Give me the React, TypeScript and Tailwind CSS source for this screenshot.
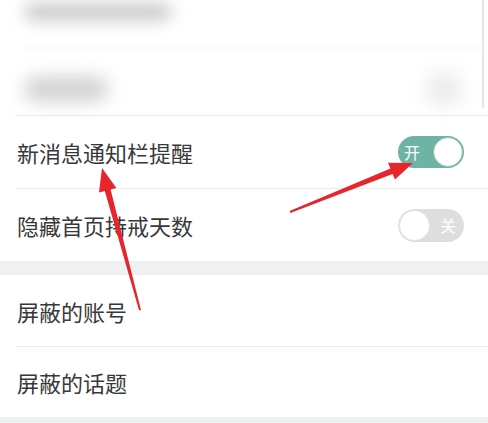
import React from "react";

const font = { fontFamily: '"Noto Sans CJK SC", "Noto Sans", sans-serif' };

function ToggleOn() {
  return (
    <div className="flex h-[32px] w-[66px] items-center justify-between rounded-full bg-[#6db4a4] pl-[6px] pr-[1px]">
      <span className="text-[16px] leading-none text-white">开</span>
      <div className="h-[30px] w-[30px] rounded-full border border-[#86c2b4] bg-white" />
    </div>
  );
}

function ToggleOff() {
  return (
    <div className="flex h-[33px] w-[66px] items-center justify-between rounded-full bg-[#dedede] pl-[1px] pr-[8px]">
      <div className="h-[31px] w-[31px] rounded-full border border-[#e6e6e6] bg-white" />
      <span className="text-[16px] leading-none text-white">关</span>
    </div>
  );
}

function Row({ label, children, border = true, h = "h-[72px]" }: { label: string; children?: React.ReactNode; border?: boolean; h?: string }) {
  return (
    <div className="bg-white">
      {border && <div className="ml-[15px] h-px bg-[#ebebeb]" />}
      <div className={`flex ${h} items-center justify-between pl-[17px] pr-[24px]`}>
        <span className="text-[22px] leading-none text-[#383838]">{label}</span>
        {children}
      </div>
    </div>
  );
}

export default function App() {
  return (
    <div className="relative h-[423px] w-[488px] overflow-hidden bg-white" style={font}>
      {/* blurred top panel */}
      <div className="h-[115px] bg-white">
        <div className="flex h-[108px] w-[484px] flex-col border-r-2 border-[#e6e6e6] pl-[24px]">
          <div className="mt-[3px] h-[18px] w-[148px] rounded-full bg-[#cbcbcb] blur-[8px]" />
          <div className="mt-[24px] h-[6px] w-full bg-[#fafafa] blur-[3px]" />
          <div className="mt-[20px] flex items-center justify-between pr-[20px]">
            <div className="h-[24px] w-[84px] rounded-full bg-[#d0d0d0] blur-[9px]" />
            <div className="h-[36px] w-[36px] rounded-full bg-[#ececec] blur-[9px]" />
          </div>
        </div>
      </div>

      <Row label="新消息通知栏提醒">
        <ToggleOn />
      </Row>
      <Row label="隐藏首页持戒天数">
        <ToggleOff />
      </Row>
      <div className="h-[14px] bg-[#eff0f2]" />
      <Row label="屏蔽的账号" border={false} h="h-[71px]" />
      <Row label="屏蔽的话题" h="h-[70px]" />
      <div className="h-[10px] bg-[#eff0f2]" />

      {/* red annotation arrows */}
      <svg className="pointer-events-none absolute left-0 top-0" width="488" height="423" viewBox="0 0 488 423">
        <polygon
          fill="#e6262c"
          points="102,168 116.4,188 110.6,189.5 141,310 139,310.3 104.8,191.1 99,192.6"
        />
        <polygon
          fill="#e6262c"
          points="413,163 395,179.6 392.6,174 290.4,212.9 289.6,211.1 390.4,168.4 388,162.8"
        />
      </svg>
    </div>
  );
}
